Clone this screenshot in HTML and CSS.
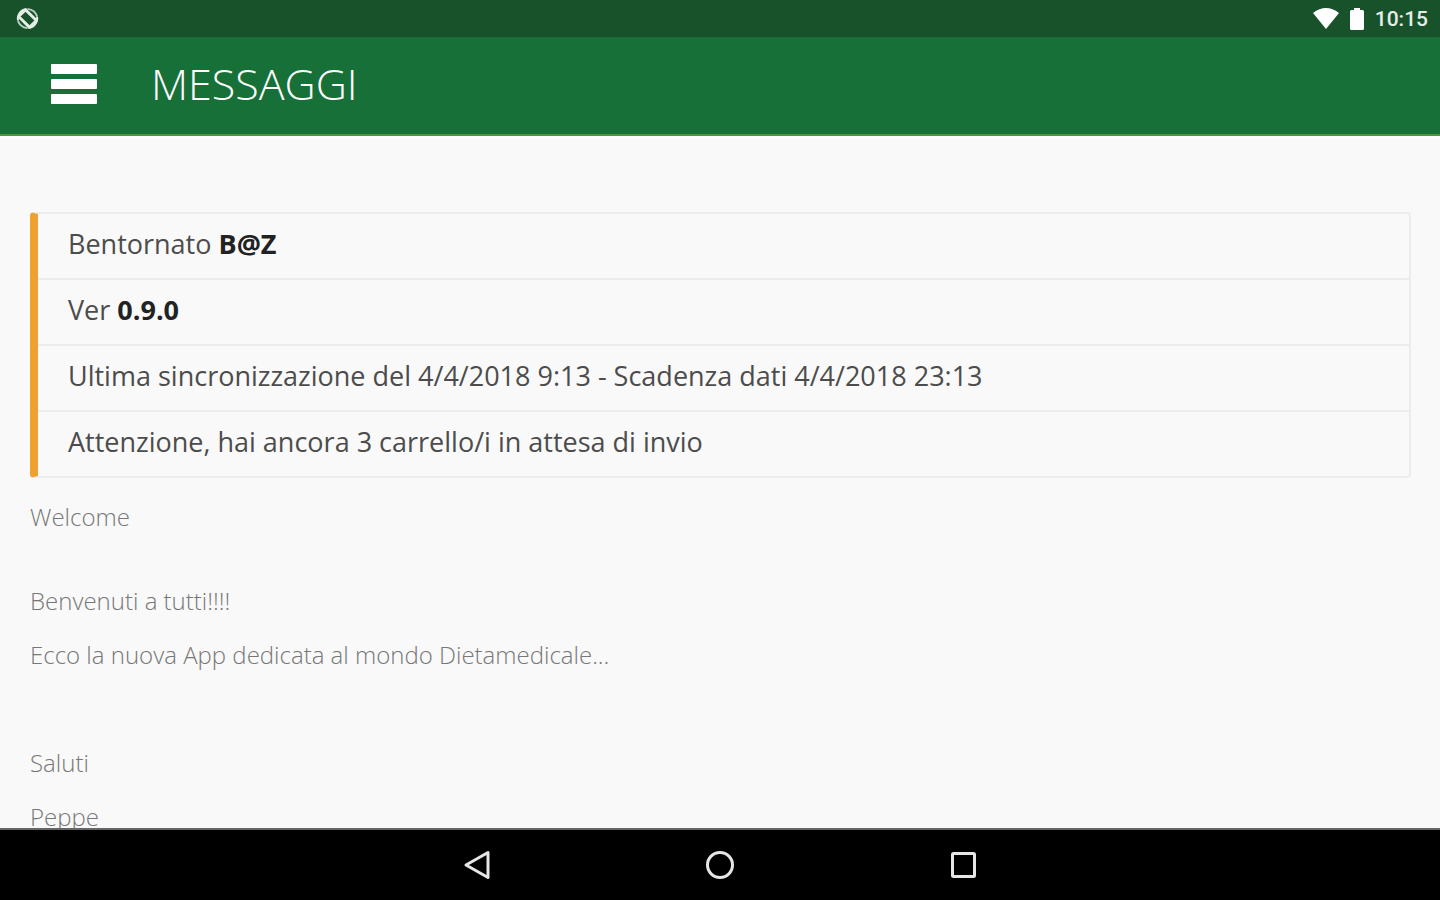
FILE: index.html
```
<!DOCTYPE html>
<html lang="it">

<head>
    <meta charset="UTF-8">
    <meta name="viewport" content="width=device-width, initial-scale=1.0">
    <title>Messaggi</title>
    <link rel="stylesheet" href="styles.css">
</head>

<body>
    <div class="page-wrapper">
        <div class="status-bar">
            <svg class="status-sync" viewBox="0 0 24 24">
                <path d="M2 14A10.300 10.300 0 0 1 11 2M22 10A10.300 10.300 0 0 1 13 22" fill="none" stroke="#e4eee7" stroke-width="2" />
                <path d="M2 14Q4 21 12 22M22 10Q20 3 12 2" fill="none" stroke="#b9cfc0" stroke-width="2" />
                <rect x="7" y="4" width="10" height="16" rx="1" transform="rotate(-45 12 12)" fill="#18522b" stroke="#e4eee7" stroke-width="3" />
            </svg>
            <div class="status-right">
                <svg class="status-wifi" viewBox="0 0 26 21">
                    <path d="M13 21L0 5Q13 -5 26 5Z" fill="#fff" />
                </svg>
                <svg class="status-battery" viewBox="0 0 14 22">
                    <path d="M4 0h6v2h2.500q1.500 0 1.500 1.500v17q0 1.500-1.500 1.500h-11q-1.500 0-1.500-1.500v-17q0-1.500 1.500-1.500H4z" fill="#fff" />
                </svg>
                <span class="time">10:15</span>
            </div>
        </div>
        <header class="header">
            <button class="menu-button" type="button" aria-label="Menu">
                <svg viewBox="0 0 46 40">
                    <rect width="46" height="10" rx="1" />
                    <rect y="15" width="46" height="10" rx="1" />
                    <rect y="30" width="46" height="10" rx="1" />
                </svg>
            </button>
            <h1 class="title">MESSAGGI</h1>
        </header>
        <main class="content">
            <ul class="info-list">
                <li>Bentornato <b>B@Z</b></li>
                <li>Ver <b>0.9.0</b></li>
                <li>Ultima sincronizzazione del 4/4/2018 9:13 - Scadenza dati 4/4/2018 23:13</li>
                <li>Attenzione, hai ancora 3 carrello/i in attesa di invio</li>
            </ul>
            <div class="message">
                <h2>Welcome</h2>
                <p>Benvenuti a tutti!!!!</p>
                <p>Ecco la nuova App dedicata al mondo Dietamedicale...</p>
                <p>&nbsp;</p>
                <p>Saluti</p>
                <p>Peppe</p>
            </div>
        </main>
        <nav class="nav-bar">
            <button type="button" aria-label="Indietro">
                <svg viewBox="0 0 30 30">
                    <path d="M26 2.500V27.500L4 15Z" />
                </svg>
            </button>
            <button type="button" aria-label="Home">
                <svg viewBox="0 0 30 30">
                    <circle cx="15" cy="15" r="12.500" />
                </svg>
            </button>
            <button type="button" aria-label="Recenti">
                <svg viewBox="0 0 30 30">
                    <rect x="4.500" y="3.500" width="22" height="23" rx="1" />
                </svg>
            </button>
        </nav>
    </div>
</body>

</html>
```
FILE: styles.css
```
html,
body {
    margin: 0;
    font-family: "Open Sans", sans-serif;
    overflow: hidden;
}

button {
    display: flex;
    padding: 0;
    border: 0;
    background: none;
}

.page-wrapper {
    height: 100vh;
    display: flex;
    flex-direction: column;
    background-color: #f9f9f9;
}

.status-bar {
    flex: none;
    display: flex;
    align-items: center;
    justify-content: space-between;
    height: 37px;
    padding: 0 12px 0 16px;
    background-color: #18522b;
}

.status-sync {
    width: 23px;
    height: 23px;
}

.status-right {
    display: flex;
    align-items: center;
}

.status-wifi {
    width: 26px;
    height: 21px;
    margin-right: 11px;
}

.status-battery {
    width: 14px;
    height: 22px;
    margin-right: 11px;
}

.time {
    color: #e4eee7;
    font-family: Roboto, sans-serif;
    font-size: 21px;
    font-weight: 500;
}

.header {
    flex: none;
    display: flex;
    align-items: center;
    gap: 54px;
    height: 94px;
    padding: 0 51px 3px;
    background-color: #177037;
    border-bottom: 2px solid #4d963a;
    box-shadow: 0 3px 2px #fff;
}

.menu-button svg {
    width: 46px;
    height: 40px;
    fill: #fff;
}

.title {
    margin: 0;
    color: #fff;
    font-size: 43px;
    font-weight: 300;
    line-height: 60px;
}

.content {
    flex: 1;
    min-height: 0;
    padding: 76px 29px 0 30px;
    overflow: hidden;
}

.info-list {
    margin: 0;
    padding: 0;
    list-style: none;
    border: 2px solid #ececec;
    border-left: 8px solid #f0a030;
    border-radius: 4px;
}

.info-list li {
    padding: 12px 30px 16px;
    color: #4c4c4c;
    font-size: 27px;
    line-height: 36px;
}

.info-list li + li {
    border-top: 2px solid #ececec;
}

.info-list b {
    color: #222;
    font-weight: 700;
}

.message {
    padding-top: 21px;
    color: #777;
    font-size: 24px;
    font-weight: 300;
    line-height: 36px;
}

.message h2 {
    margin: 0 0 48px;
    font-size: 24px;
    font-weight: 300;
}

.message p {
    margin: 0 0 18px;
}

.nav-bar {
    flex: none;
    display: flex;
    align-items: center;
    justify-content: center;
    gap: 213px;
    height: 70px;
    background-color: #000;
    border-top: 2px solid #666;
}

.nav-bar svg {
    width: 30px;
    height: 30px;
    fill: none;
    stroke: #e6e6e6;
    stroke-width: 3;
    stroke-linejoin: round;
}
```
